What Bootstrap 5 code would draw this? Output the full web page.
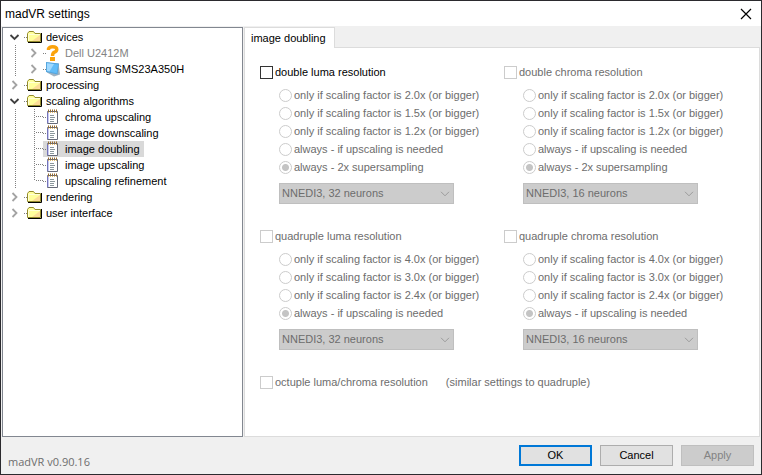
<!DOCTYPE html>
<html lang="en">
<head>
<meta charset="utf-8">
<meta name="viewport" content="width=device-width, initial-scale=1">
<title>madVR settings</title>
<link href="https://cdn.jsdelivr.net/npm/bootstrap@5.3.0/dist/css/bootstrap.min.css" rel="stylesheet">
<style>
  body { font-family: "Liberation Sans", Arial, sans-serif; font-size: 11px; line-height: 16px; color: #000; background: #f0f0f0; }
  .window { border: 1px solid #2b2a2e; background: #f0f0f0; }
  .titlebar { height: 25px; padding: 0 9px 0 4px; background: #fff; }
  .titlebar h1 { font-size: 12px; line-height: 16px; }
  .close-btn { width: 12px; height: 12px; }
  .work { gap: 1px; padding: 1px 1px 0; }

  .tree { flex: 0 0 241px; padding: 1px 2px; border: 1px solid #828790; background: #fff; }
  .tree-row { height: 16px; }
  .cell { flex: none; width: 19px; height: 16px; padding: 0; border: 0; background: none; }
  .cell svg { display: block; }
  .node { height: 16px; padding-right: 4px; color: #000; text-decoration: none; white-space: nowrap; }
  .node svg { flex: none; margin-right: 4px; }
  .node::before { content: ""; width: 3px; border-top: 1px dotted #808080; }
  .node.active { background: #d9d9d9; }
  .node.missing { color: #838383; }

  .tab-strip { height: 21px; z-index: 1; margin-bottom: -1px; }
  .tab-strip .nav-link { height: 21px; padding: 0 8px 0 6px; border: 1px solid #dcdcdc; border-bottom: 0; border-radius: 0; background: #fff; color: #000; line-height: 20px; }
  .pane { padding: 15px 0 15px 15px; border: 1px solid #dcdcdc; background: #fff; }
  .groups { row-gap: 23px; }
  .group { flex: 0 1 244px; min-width: 0; }
  .opt { display: flex; align-items: center; gap: 2px; min-height: 18px; margin: 0; padding: 0; white-space: nowrap; }
  .opt .form-check-input { flex: none; float: none; width: 13px; height: 13px; margin: 0; border: 1px solid #ccc; background-color: #fff; box-shadow: none; }
  .opt .form-check-input[type=checkbox] { border-radius: 0; }
  .opt .form-check-input:enabled { border-color: #333; }
  .opt .form-check-input:disabled { opacity: 1; }
  .opt .form-check-input[type=radio]:checked { background: radial-gradient(circle, #c4c4c4 3px, #fff 4px); }
  .opt .form-check-input:disabled ~ .form-check-label, .note { opacity: 1; color: #6d6d6d; }
  .choices { margin: 5px 0 0 19px; }
  .choices .form-select { width: 175px; height: 21px; margin-top: 7px; padding: 0 20px 0 2px; border: 1px solid #bfbfbf; border-radius: 0; color: #6d6d6d; font-size: 11px; line-height: 19px; opacity: 1;
    background: #ccc url("data:image/svg+xml,%3Csvg xmlns='http://www.w3.org/2000/svg' width='10' height='6'%3E%3Cpath d='M1 .8 5 4.8 9 .8' fill='none' stroke='%239b9b9b'/%3E%3C/svg%3E") no-repeat right 3px center / 10px 6px; }
  .note { margin-left: 16px; }

  .actions { height: 37px; padding: 0 7px; }
  .version { font-family: "Open Sans", sans-serif; color: #6d6d6d; padding-top: 12px; }
  .actions .btn { width: 73px; height: 21px; padding: 0; border: 1px solid #adadad; border-radius: 0; background: #e1e1e1; color: #000; font-size: 11px; line-height: 17px; }
  .actions .btn-ok { border: 2px solid #0078d7; }
  .actions .btn:disabled { border-color: #bfbfbf; background: #ccc; color: #838383; opacity: 1; }
</style>
</head>
<body>
<svg class="d-none" aria-hidden="true">
  <symbol id="folder" viewBox="0 0 15 14">
    <path d="M1 12.500H14.500V3" fill="none" stroke="#000"/>
    <path d="M.5 11.500V3.500L2 1.500H6.500L8 3.500H13.500V11.500Z" fill="#ffff9c" stroke="#948c2c"/>
    <path d="M5 11 13 5V11Z" fill="#fbdc98"/>
    <path d="M1.500 11V4.500H13" fill="none" stroke="#ffffd8"/>
  </symbol>
  <symbol id="doc" viewBox="0 0 15 16">
    <path d="M1.500 2.500H11.500V14.500H1.500Z" fill="#fff" stroke="#666a78"/>
    <path d="M1.500 3V14" stroke="#7474b8"/><path d="M2.500 4V14" stroke="#c9cbf0"/>
    <path d="M2 1.500H12" stroke="#9a6c2c" stroke-width="2" stroke-dasharray="1 1"/>
    <path d="M2 3.500H11" stroke="#e2bd70" stroke-dasharray="1 1"/>
    <path d="M4 6.500H8M4 8.500H9M4 10.500H8M4 12.500H8" stroke="#8b979c"/>
  </symbol>
  <symbol id="unknown" viewBox="0 0 15 16">
    <path d="M2.500 5V3.800Q3.500 1.700 6.500 1.700Q10.800 1.700 10.800 4.500Q10.800 6.200 8.500 7.200Q6.500 8 6.500 11" fill="none" stroke="#fba30c" stroke-width="3.400"/>
    <path d="M4 12H9V16H4Z" fill="#fba30c"/>
  </symbol>
  <symbol id="monitor" viewBox="0 0 15 16">
    <path d="M.5 1.500 12.500 2.500 14 13.500 8 15.500 1 11.500Z" fill="#9fb2c1"/>
    <path d="M0 1 13 2.500 11.500 13.500 0 11Z" fill="#55a6de"/>
    <path d="M1 2.200 12 3.500 10.700 12.200 1 10Z" fill="#62bdf9"/>
    <path d="M1 2.200 8 3 3.500 10.500 1 10Z" fill="#a0d9ff"/>
  </symbol>
  <symbol id="opened" viewBox="0 0 19 16"><path d="M5.500 6 9.500 10 13.500 6" fill="none" stroke="#404040" stroke-width="1.800"/></symbol>
  <symbol id="closed" viewBox="0 0 19 16"><path d="M7.500 4 11.500 8 7.500 12" fill="none" stroke="#a3a3a3" stroke-width="1.800"/></symbol>
  <symbol id="line" viewBox="0 0 19 16"><path d="M10.500 0V16" stroke="#808080" stroke-dasharray="1 1"/></symbol>
  <symbol id="branch" viewBox="0 0 19 16"><path d="M10.500 0V16M12 7.500H19" stroke="#808080" stroke-dasharray="1 1"/></symbol>
  <symbol id="branch-end" viewBox="0 0 19 16"><path d="M10.500 0V8M12 7.500H19" stroke="#808080" stroke-dasharray="1 1"/></symbol>
</svg>

<div class="window d-flex flex-column min-vh-100">
  <header class="titlebar d-flex align-items-center justify-content-between">
    <h1 class="m-0 fw-normal">madVR settings</h1>
    <button class="close-btn btn p-0 border-0 d-flex" type="button" aria-label="Close">
      <svg width="12" height="12"><path d="M1 1 11 11M11 1 1 11" stroke="#000" stroke-width="1.200"/></svg>
    </button>
  </header>

  <div class="work d-flex flex-grow-1">
    <nav class="tree" aria-label="Settings">
      <ul class="list-unstyled m-0">
        <li>
          <div class="tree-row d-flex"><button class="cell" type="button" aria-label="Collapse devices"><svg width="19" height="16"><use href="#opened"/></svg></button><a class="node d-flex align-items-center" href="#"><svg width="15" height="14"><use href="#folder"/></svg>devices</a></div>
          <ul class="list-unstyled m-0">
            <li class="tree-row d-flex"><span class="cell"><svg width="19" height="16"><use href="#line"/></svg></span><button class="cell" type="button" aria-label="Expand Dell U2412M"><svg width="19" height="16"><use href="#closed"/></svg></button><a class="node missing d-flex align-items-center" href="#"><svg width="15" height="16"><use href="#unknown"/></svg>Dell U2412M</a></li>
            <li class="tree-row d-flex"><span class="cell"><svg width="19" height="16"><use href="#line"/></svg></span><button class="cell" type="button" aria-label="Expand Samsung SMS23A350H"><svg width="19" height="16"><use href="#closed"/></svg></button><a class="node d-flex align-items-center" href="#"><svg width="15" height="16"><use href="#monitor"/></svg>Samsung SMS23A350H</a></li>
          </ul>
        </li>
        <li class="tree-row d-flex"><button class="cell" type="button" aria-label="Expand processing"><svg width="19" height="16"><use href="#closed"/></svg></button><a class="node d-flex align-items-center" href="#"><svg width="15" height="14"><use href="#folder"/></svg>processing</a></li>
        <li>
          <div class="tree-row d-flex"><button class="cell" type="button" aria-label="Collapse scaling algorithms"><svg width="19" height="16"><use href="#opened"/></svg></button><a class="node d-flex align-items-center" href="#"><svg width="15" height="14"><use href="#folder"/></svg>scaling algorithms</a></div>
          <ul class="list-unstyled m-0">
            <li class="tree-row d-flex"><span class="cell"><svg width="19" height="16"><use href="#line"/></svg></span><span class="cell"><svg width="19" height="16"><use href="#branch"/></svg></span><a class="node d-flex align-items-center" href="#"><svg width="15" height="16"><use href="#doc"/></svg>chroma upscaling</a></li>
            <li class="tree-row d-flex"><span class="cell"><svg width="19" height="16"><use href="#line"/></svg></span><span class="cell"><svg width="19" height="16"><use href="#branch"/></svg></span><a class="node d-flex align-items-center" href="#"><svg width="15" height="16"><use href="#doc"/></svg>image downscaling</a></li>
            <li class="tree-row d-flex"><span class="cell"><svg width="19" height="16"><use href="#line"/></svg></span><span class="cell"><svg width="19" height="16"><use href="#branch"/></svg></span><a class="node active d-flex align-items-center" href="#" aria-current="page"><svg width="15" height="16"><use href="#doc"/></svg>image doubling</a></li>
            <li class="tree-row d-flex"><span class="cell"><svg width="19" height="16"><use href="#line"/></svg></span><span class="cell"><svg width="19" height="16"><use href="#branch"/></svg></span><a class="node d-flex align-items-center" href="#"><svg width="15" height="16"><use href="#doc"/></svg>image upscaling</a></li>
            <li class="tree-row d-flex"><span class="cell"><svg width="19" height="16"><use href="#line"/></svg></span><span class="cell"><svg width="19" height="16"><use href="#branch-end"/></svg></span><a class="node d-flex align-items-center" href="#"><svg width="15" height="16"><use href="#doc"/></svg>upscaling refinement</a></li>
          </ul>
        </li>
        <li class="tree-row d-flex"><button class="cell" type="button" aria-label="Expand rendering"><svg width="19" height="16"><use href="#closed"/></svg></button><a class="node d-flex align-items-center" href="#"><svg width="15" height="14"><use href="#folder"/></svg>rendering</a></li>
        <li class="tree-row d-flex"><button class="cell" type="button" aria-label="Expand user interface"><svg width="19" height="16"><use href="#closed"/></svg></button><a class="node d-flex align-items-center" href="#"><svg width="15" height="14"><use href="#folder"/></svg>user interface</a></li>
      </ul>
    </nav>

    <main class="d-flex flex-column flex-grow-1">
      <ul class="tab-strip nav position-relative" role="tablist">
        <li class="nav-item" role="presentation"><button class="nav-link active" type="button" role="tab" aria-selected="true">image doubling</button></li>
      </ul>
      <form class="pane flex-grow-1">
        <div class="groups d-flex flex-wrap">
          <section class="group">
            <div class="opt"><input class="form-check-input" type="checkbox" id="dl"><label class="form-check-label" for="dl">double luma resolution</label></div>
            <div class="choices">
              <div class="opt"><input class="form-check-input" type="radio" name="dlm" id="dl1" disabled><label class="form-check-label" for="dl1">only if scaling factor is 2.0x (or bigger)</label></div>
              <div class="opt"><input class="form-check-input" type="radio" name="dlm" id="dl2" disabled><label class="form-check-label" for="dl2">only if scaling factor is 1.5x (or bigger)</label></div>
              <div class="opt"><input class="form-check-input" type="radio" name="dlm" id="dl3" disabled><label class="form-check-label" for="dl3">only if scaling factor is 1.2x (or bigger)</label></div>
              <div class="opt"><input class="form-check-input" type="radio" name="dlm" id="dl4" disabled><label class="form-check-label" for="dl4">always - if upscaling is needed</label></div>
              <div class="opt"><input class="form-check-input" type="radio" name="dlm" id="dl5" checked disabled><label class="form-check-label" for="dl5">always - 2x supersampling</label></div>
              <select class="form-select" aria-label="Double luma algorithm" disabled><option>NNEDI3, 32 neurons</option></select>
            </div>
          </section>
          <section class="group">
            <div class="opt"><input class="form-check-input" type="checkbox" id="dc" disabled><label class="form-check-label" for="dc">double chroma resolution</label></div>
            <div class="choices">
              <div class="opt"><input class="form-check-input" type="radio" name="dcm" id="dc1" disabled><label class="form-check-label" for="dc1">only if scaling factor is 2.0x (or bigger)</label></div>
              <div class="opt"><input class="form-check-input" type="radio" name="dcm" id="dc2" disabled><label class="form-check-label" for="dc2">only if scaling factor is 1.5x (or bigger)</label></div>
              <div class="opt"><input class="form-check-input" type="radio" name="dcm" id="dc3" disabled><label class="form-check-label" for="dc3">only if scaling factor is 1.2x (or bigger)</label></div>
              <div class="opt"><input class="form-check-input" type="radio" name="dcm" id="dc4" disabled><label class="form-check-label" for="dc4">always - if upscaling is needed</label></div>
              <div class="opt"><input class="form-check-input" type="radio" name="dcm" id="dc5" checked disabled><label class="form-check-label" for="dc5">always - 2x supersampling</label></div>
              <select class="form-select" aria-label="Double chroma algorithm" disabled><option>NNEDI3, 16 neurons</option></select>
            </div>
          </section>
          <section class="group">
            <div class="opt"><input class="form-check-input" type="checkbox" id="ql" disabled><label class="form-check-label" for="ql">quadruple luma resolution</label></div>
            <div class="choices">
              <div class="opt"><input class="form-check-input" type="radio" name="qlm" id="ql1" disabled><label class="form-check-label" for="ql1">only if scaling factor is 4.0x (or bigger)</label></div>
              <div class="opt"><input class="form-check-input" type="radio" name="qlm" id="ql2" disabled><label class="form-check-label" for="ql2">only if scaling factor is 3.0x (or bigger)</label></div>
              <div class="opt"><input class="form-check-input" type="radio" name="qlm" id="ql3" disabled><label class="form-check-label" for="ql3">only if scaling factor is 2.4x (or bigger)</label></div>
              <div class="opt"><input class="form-check-input" type="radio" name="qlm" id="ql4" checked disabled><label class="form-check-label" for="ql4">always - if upscaling is needed</label></div>
              <select class="form-select" aria-label="Quadruple luma algorithm" disabled><option>NNEDI3, 32 neurons</option></select>
            </div>
          </section>
          <section class="group">
            <div class="opt"><input class="form-check-input" type="checkbox" id="qc" disabled><label class="form-check-label" for="qc">quadruple chroma resolution</label></div>
            <div class="choices">
              <div class="opt"><input class="form-check-input" type="radio" name="qcm" id="qc1" disabled><label class="form-check-label" for="qc1">only if scaling factor is 4.0x (or bigger)</label></div>
              <div class="opt"><input class="form-check-input" type="radio" name="qcm" id="qc2" disabled><label class="form-check-label" for="qc2">only if scaling factor is 3.0x (or bigger)</label></div>
              <div class="opt"><input class="form-check-input" type="radio" name="qcm" id="qc3" disabled><label class="form-check-label" for="qc3">only if scaling factor is 2.4x (or bigger)</label></div>
              <div class="opt"><input class="form-check-input" type="radio" name="qcm" id="qc4" checked disabled><label class="form-check-label" for="qc4">always - if upscaling is needed</label></div>
              <select class="form-select" aria-label="Quadruple chroma algorithm" disabled><option>NNEDI3, 16 neurons</option></select>
            </div>
          </section>
          <div class="opt w-100"><input class="form-check-input" type="checkbox" id="oc" disabled><label class="form-check-label" for="oc">octuple luma/chroma resolution</label><span class="note">(similar settings to quadruple)</span></div>
        </div>
      </form>
    </main>
  </div>

  <footer class="actions d-flex align-items-center gap-2">
    <span class="version me-auto">madVR v0.90.16</span>
    <button class="btn btn-ok" type="button">OK</button>
    <button class="btn" type="button">Cancel</button>
    <button class="btn" type="button" disabled>Apply</button>
  </footer>
</div>
<script src="https://cdn.jsdelivr.net/npm/bootstrap@5.3.0/dist/js/bootstrap.bundle.min.js"></script>
</body>
</html>
